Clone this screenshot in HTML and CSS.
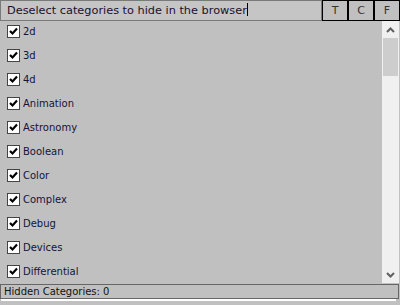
FILE: index.html
```html
<!DOCTYPE html>
<html lang="en">
<head>
    <meta charset="UTF-8">
    <title>Category Filter</title>
    <link rel="stylesheet" href="styles.css">
</head>
<body>
    <div class="panel">
        <div class="toolbar">
            <div class="search">Deselect categories to hide in the browser<span class="caret"></span></div>
            <div class="tbtn">T</div>
            <div class="tbtn">C</div>
            <div class="tbtn">F</div>
        </div>

        <div class="content">
            <ul class="list" id="catList"></ul>
            <div class="scrollbar">
                <div class="arrow">
                    <svg width="9" height="6" viewBox="0 0 9 6"><polyline points="1,5 4.5,1.5 8,5" fill="none" stroke="#606060" stroke-width="2"/></svg>
                </div>
                <div class="thumb"></div>
                <div class="track"></div>
                <div class="arrow">
                    <svg width="9" height="6" viewBox="0 0 9 6"><polyline points="1,1 4.5,4.5 8,1" fill="none" stroke="#606060" stroke-width="2"/></svg>
                </div>
            </div>
        </div>

        <div class="footer">Hidden Categories: 0</div>
        <div class="footer-line"></div>
    </div>

    <script>
        const categories = ['2d', '3d', '4d', 'Animation', 'Astronomy', 'Boolean', 'Color', 'Complex', 'Debug', 'Devices', 'Differential'];
        const list = document.getElementById('catList');
        categories.forEach(name => {
            const li = document.createElement('li');
            li.innerHTML = '<span class="check"><svg width="11" height="11" viewBox="0 0 11 11"><polyline points="2,5 4.5,7.5 9,2.5" fill="none" stroke="#000" stroke-width="2.2"/></svg></span>' + name;
            list.appendChild(li);
        });
    </script>
</body>
</html>
```

FILE: styles.css
```css
body {
    margin: 0;
    background-color: #c0c0c0;
    font-family: "DejaVu Sans", Verdana, sans-serif;
    color: #111;
}

.panel {
    width: 400px;
    height: 305px;
    display: flex;
    flex-direction: column;
}

.toolbar {
    display: flex;
    height: 21px;
}

.search {
    flex: 1;
    border: 1px solid #7a7a7a;
    background-color: #c5c5c5;
    padding-left: 6px;
    font-size: 11.3px;
    line-height: 19px;
    color: #1a1030;
    white-space: nowrap;
}

.caret {
    display: inline-block;
    width: 1px;
    height: 13px;
    background-color: #000;
    vertical-align: -2px;
}

.tbtn {
    width: 24px;
    border: 1px solid #000;
    text-align: center;
    font-size: 11px;
    line-height: 19px;
    color: #333;
}

.content {
    display: flex;
    height: 262px;
}

.list {
    flex: 1;
    list-style: none;
    margin: 0;
    padding: 0;
    overflow: hidden;
}

.list li {
    display: flex;
    align-items: flex-start;
    height: 20px;
    padding: 4px 0 0 7px;
    font-size: 10px;
    line-height: 13px;
    color: #14143a;
}

.check {
    width: 11px;
    height: 11px;
    border: 1px solid #444;
    background-color: #fff;
    margin-right: 3px;
    display: flex;
}

.scrollbar {
    width: 17px;
    margin-right: 1px;
    background-color: #f0f0f0;
    display: flex;
    flex-direction: column;
}

.arrow {
    height: 17px;
    display: flex;
    align-items: center;
    justify-content: center;
}

.thumb {
    height: 38px;
    margin: 0 1px 0 1px;
    background-color: #cdcdcd;
}

.track {
    flex: 1;
}

.footer {
    margin: 1px 1px 0 0;
    height: 13px;
    border: 1px solid #666;
    padding-left: 3px;
    font-size: 10px;
    line-height: 13px;
    color: #111;
}

.footer-line {
    height: 2px;
    margin: 0 4px 0 1px;
    background-color: #fff;
}
```
